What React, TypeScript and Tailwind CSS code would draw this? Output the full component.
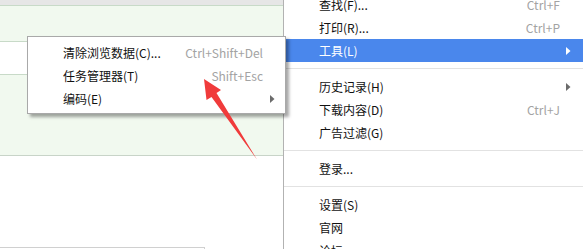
import React from "react";

type Item =
  | { kind: "item"; label: string; shortcut?: string; sub?: boolean; active?: boolean }
  | { kind: "sep" };

const mainItems: Item[] = [
  { kind: "item", label: "查找(F)...", shortcut: "Ctrl+F" },
  { kind: "item", label: "打印(R)...", shortcut: "Ctrl+P" },
  { kind: "item", label: "工具(L)", sub: true, active: true },
  { kind: "sep" },
  { kind: "item", label: "历史记录(H)", sub: true },
  { kind: "item", label: "下载内容(D)", shortcut: "Ctrl+J" },
  { kind: "item", label: "广告过滤(G)" },
  { kind: "sep" },
  { kind: "item", label: "登录..." },
  { kind: "sep" },
  { kind: "item", label: "设置(S)" },
  { kind: "item", label: "官网" },
  { kind: "item", label: "论坛..." },
];

const toolItems: Item[] = [
  { kind: "item", label: "清除浏览数据(C)...", shortcut: "Ctrl+Shift+Del" },
  { kind: "item", label: "任务管理器(T)", shortcut: "Shift+Esc" },
  { kind: "item", label: "编码(E)", sub: true },
];

function Caret({ white }: { white?: boolean }) {
  return (
    <svg width="5" height="8" viewBox="0 0 5 8" className="shrink-0">
      <path d="M0 0 L4.5 4 L0 8 Z" fill={white ? "#ffffff" : "#6b6b6b"} />
    </svg>
  );
}

function MenuRow({ item, pl, pr, caretSlot }: { item: Extract<Item, { kind: "item" }>; pl: string; pr: string; caretSlot: string }) {
  return (
    <div
      className={`flex h-[23px] items-center ${pl} ${
        item.active ? "bg-[#4a87ec] text-white" : "text-[#111111]"
      }`}
    >
      <span className="flex-1 whitespace-nowrap">{item.label}</span>
      {item.shortcut && (
        <span className={`whitespace-nowrap ${pr} text-[#a3a3a3]`}>{item.shortcut}</span>
      )}
      {item.sub && (
        <span className={`flex ${caretSlot} justify-center`}>
          <Caret white={item.active} />
        </span>
      )}
    </div>
  );
}

export default function App() {
  return (
    <div
      className="relative h-[249px] w-[583px] overflow-hidden bg-white text-[12px] leading-none"
      style={{ fontFamily: '"Noto Sans CJK SC", "Noto Sans", sans-serif' }}
    >
      {/* page behind the menu */}
      <div className="flex h-full flex-col">
        <div className="h-[5px] bg-[#e6e6e6]" />
        <div className="h-[37px] border-y border-[#c8dac8] bg-[#f1f9ef]" />
        <div className="h-[33px] border-b border-[#c8dac8] bg-white" />
        <div className="h-[81px] border-b border-[#c8d4c8] bg-[#f1f9ef]" />
        <div className="h-[91px] bg-white" />
        <div className="flex-1 w-[205px] border-t border-r border-[#d0d0d0]" />
      </div>

      {/* main context menu */}
      <div className="absolute top-0 bottom-0 left-[283px] right-0 overflow-hidden border-l border-[#b2b2b2] bg-white">
        <div className="mt-[-7px] flex flex-col">
          {mainItems.map((item, i) =>
            item.kind === "sep" ? (
              <div key={i} className="flex h-[13px] items-center">
                <div className="h-px w-full bg-[#e2e2e2]" />
              </div>
            ) : (
              <MenuRow key={i} item={item} pl="pl-[35px]" pr="pr-[23px]" caretSlot="w-[24px] pr-[6px]" />
            )
          )}
        </div>
      </div>

      {/* tools submenu */}
      <div className="absolute left-[27px] top-[36px] flex w-[259px] flex-col border border-[#a9a9a9] bg-white pt-[4px] pb-[3px] shadow-[3px_3px_3px_rgba(0,0,0,0.35)]">
        {toolItems.map((item, i) =>
          item.kind === "item" ? (
            <MenuRow key={i} item={item} pl="pl-[35px]" pr="pr-[22px]" caretSlot="w-[22px] pr-[4px] ml-auto" />
          ) : null
        )}
      </div>

      {/* red annotation arrow */}
      <svg className="pointer-events-none absolute left-0 top-0" width="583" height="249">
        <polygon
          points="204,79 221,90 216.5,93 257,159.5 211.5,97 206.5,100"
          fill="#f03b3b"
        />
      </svg>
    </div>
  );
}
